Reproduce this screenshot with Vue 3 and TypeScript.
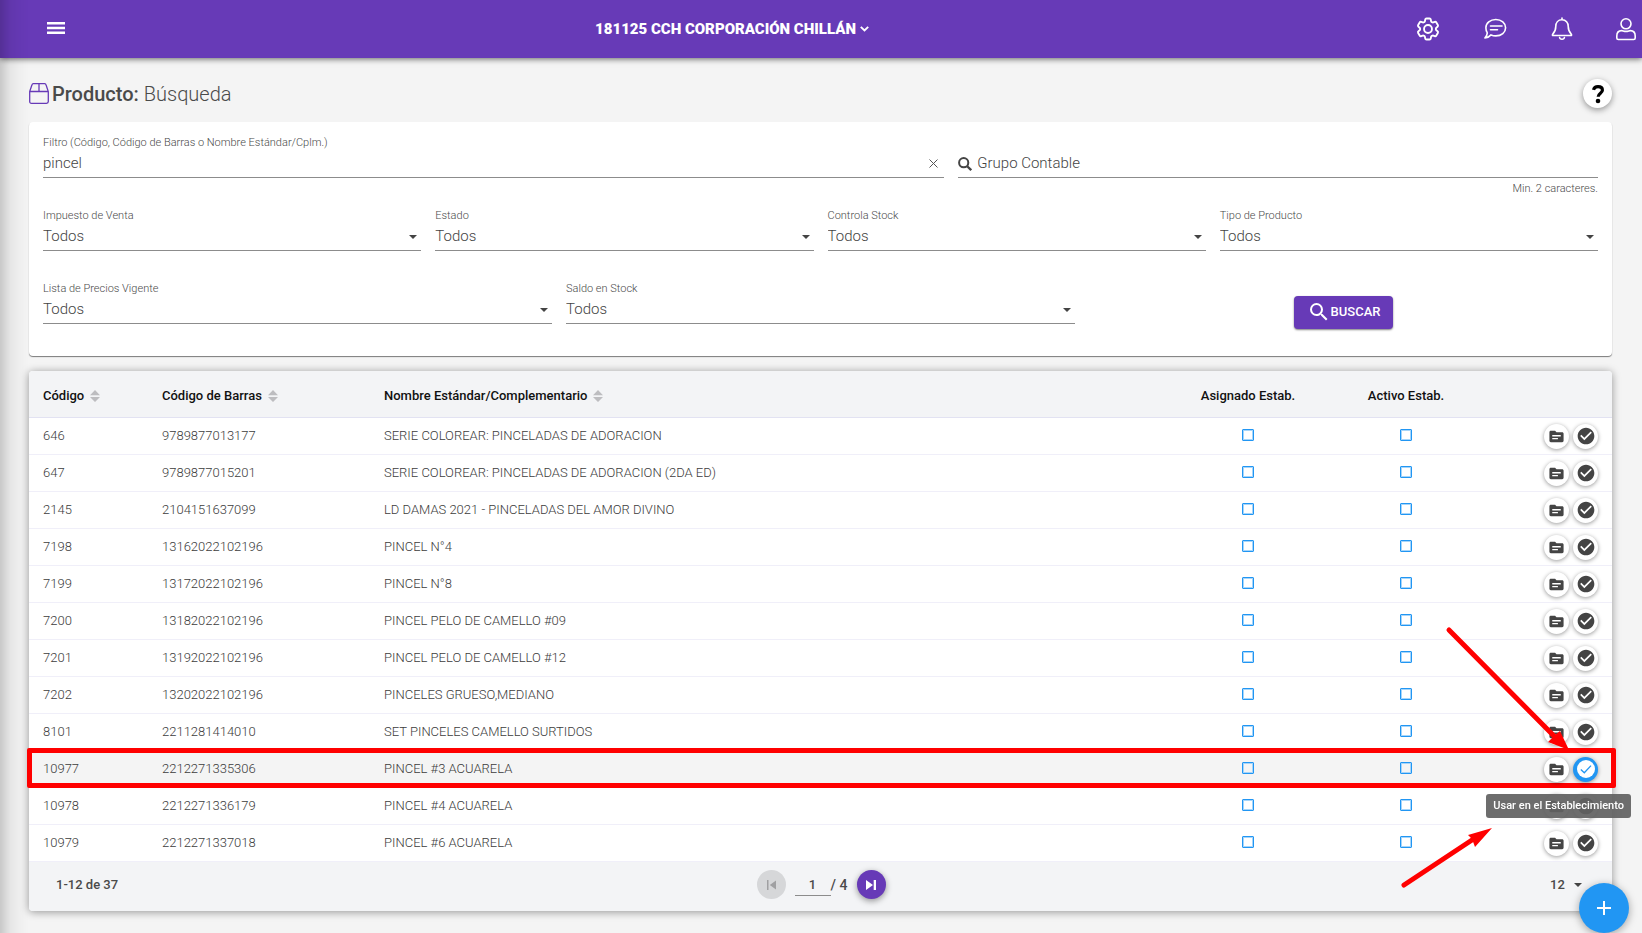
<script setup lang="ts">
import { ref } from 'vue'

interface Product {
  code: string
  barcode: string
  name: string
  assigned: boolean
  active: boolean
  marked?: boolean
}

const rows: [string, string, string][] = [
  ['646', '9789877013177', 'SERIE COLOREAR: PINCELADAS DE ADORACION'],
  ['647', '9789877015201', 'SERIE COLOREAR: PINCELADAS DE ADORACION (2DA ED)'],
  ['2145', '2104151637099', 'LD DAMAS 2021 - PINCELADAS DEL AMOR DIVINO'],
  ['7198', '13162022102196', 'PINCEL N°4'],
  ['7199', '13172022102196', 'PINCEL N°8'],
  ['7200', '13182022102196', 'PINCEL PELO DE CAMELLO #09'],
  ['7201', '13192022102196', 'PINCEL PELO DE CAMELLO #12'],
  ['7202', '13202022102196', 'PINCELES GRUESO,MEDIANO'],
  ['8101', '2211281414010', 'SET PINCELES CAMELLO SURTIDOS'],
  ['10977', '2212271335306', 'PINCEL #3 ACUARELA'],
  ['10978', '2212271336179', 'PINCEL #4 ACUARELA'],
  ['10979', '2212271337018', 'PINCEL #6 ACUARELA'],
]

const products = ref<Product[]>(
  rows.map(([code, barcode, name]) => ({
    code,
    barcode,
    name,
    assigned: false,
    active: false,
    marked: code === '10977',
  })),
)

const query = ref('pincel')
const group = ref('')
const page = ref('1')

const selects = [
  { id: 'impuesto', label: 'Impuesto de Venta', span: 'span3' },
  { id: 'estado', label: 'Estado', span: 'span3' },
  { id: 'controla', label: 'Controla Stock', span: 'span3' },
  { id: 'tipo', label: 'Tipo de Producto', span: 'span3' },
  { id: 'lista', label: 'Lista de Precios Vigente', span: 'span4' },
  { id: 'saldo', label: 'Saldo en Stock', span: 'span4' },
]
const sortable = ['Código', 'Código de Barras', 'Nombre Estándar/Complementario']
</script>

<template>
  <div class="page">
    <header class="topbar">
      <button class="menu" aria-label="Menú">
        <svg width="18" height="12" viewBox="0 0 18 12"><path d="M0 0h18v2.500H0zM0 4.800h18v2.400H0zM0 9.500h18v2.500H0z" /></svg>
      </button>
      <div class="org">
        <button class="org-button">
          181125 CCH CORPORACIÓN CHILLÁN
          <svg width="9" height="6" viewBox="0 0 9 6"><path d="M.8.8l3.7 3.7L8.2.8" fill="none" stroke="#fff" stroke-width="1.900" /></svg>
        </button>
      </div>
      <nav class="tools" aria-label="Cuenta">
        <button aria-label="Configuración">
          <svg width="28" height="28" viewBox="0 0 24 24">
            <path d="M9.594 3.94c.09-.542.56-.94 1.11-.94h2.593c.55 0 1.02.398 1.11.94l.213 1.281c.063.374.313.686.645.87.074.04.147.083.22.127.325.196.72.257 1.075.124l1.217-.456a1.125 1.125 0 0 1 1.37.49l1.296 2.247a1.125 1.125 0 0 1-.26 1.431l-1.003.827c-.293.241-.438.613-.43.992a7.723 7.723 0 0 1 0 .255c-.008.378.137.75.43.991l1.004.827c.424.35.534.955.26 1.43l-1.298 2.247a1.125 1.125 0 0 1-1.369.491l-1.217-.456c-.355-.133-.75-.072-1.076.124a6.47 6.47 0 0 1-.22.128c-.331.183-.581.495-.644.869l-.213 1.281c-.09.543-.56.94-1.11.94h-2.594c-.55 0-1.019-.398-1.11-.94l-.213-1.281c-.062-.374-.312-.686-.644-.87a6.52 6.52 0 0 1-.22-.127c-.325-.196-.72-.257-1.076-.124l-1.217.456a1.125 1.125 0 0 1-1.369-.49l-1.297-2.247a1.125 1.125 0 0 1 .26-1.431l1.004-.827c.292-.24.437-.613.43-.991a6.932 6.932 0 0 1 0-.255c.007-.38-.138-.751-.43-.992l-1.004-.827a1.125 1.125 0 0 1-.26-1.43l1.297-2.247a1.125 1.125 0 0 1 1.37-.491l1.216.456c.356.133.751.072 1.076-.124.072-.044.146-.086.22-.128.332-.183.582-.495.644-.869l.214-1.28Z" />
            <circle cx="12" cy="12" r="3.4" />
          </svg>
        </button>
        <button aria-label="Mensajes">
          <svg width="24" height="24" viewBox="0 0 24 24">
            <path d="M12.8 2.5C18.4 2.5 22.6 6 22.6 10.700S18.400 18.900 12.800 18.900C11 18.900 9.400 18.500 8 17.900C6.500 19.600 4.200 20.900 1.900 21C3.200 19.600 4.200 18 4.300 15.900C3.300 14.500 2.900 12.700 2.900 10.700C2.900 6 7.200 2.500 12.800 2.500Z" />
            <path d="M7.500 9h11.500M7.500 12.700h7" />
          </svg>
        </button>
        <button aria-label="Notificaciones">
          <svg width="24" height="24" viewBox="0 0 24 24">
            <path d="M12 1v1.800M12 2.800C8 2.800 5.800 5.700 5.800 9.300C5.800 14 4.300 15.500 2.700 17.200C2.100 17.900 2.400 18.500 3.200 18.500H20.800C21.600 18.500 21.900 17.900 21.300 17.200C19.700 15.500 18.200 14 18.200 9.300C18.200 5.700 16 2.800 12 2.800ZM9.600 20.500C9.900 22.800 14.100 22.800 14.400 20.500" />
          </svg>
        </button>
        <button class="last" aria-label="Usuario">
          <svg width="22" height="24" viewBox="0 0 22 24">
            <circle cx="11" cy="6.800" r="5" />
            <path d="M6.700 13.600C8 13.600 8.700 14.400 11 14.400S14 13.600 15.300 13.600C18.500 13.600 20.200 16 20.200 19V21C20.200 21.900 19.600 22.500 18.700 22.500H3.300C2.400 22.500 1.800 21.900 1.800 21V19C1.800 16 3.500 13.600 6.700 13.600Z" />
          </svg>
        </button>
      </nav>
    </header>

    <main class="content">
      <div class="heading">
        <svg width="20" height="21" viewBox="0 0 20 21" fill="none" stroke="#673ab7" stroke-width="1.300">
          <path d="M.7 8.500L3 1.800C3.200 1.100 3.600.7 4.300.7H15.700C16.400.7 16.800 1.100 17 1.800L19.300 8.500V18.500C19.300 19.700 18.700 20.300 17.500 20.300H2.500C1.300 20.300.7 19.700.7 18.500ZM.7 8.500H19.300M10 .7V8.500" />
        </svg>
        <h1>Producto: <span>Búsqueda</span></h1>
        <button class="help" aria-label="Ayuda">
          <svg width="14" height="20" viewBox="0 0 14 20"><path d="M2.500 5.800C3.100 3.600 4.800 2.700 7 2.700C9.700 2.700 11.400 4 11.400 6.200C11.400 9.200 7.200 9.200 7.200 12.800" fill="none" stroke="#000" stroke-width="3.200" /><circle cx="7" cy="17" r="2.300" /></svg>
        </button>
      </div>

      <form class="card filters" @submit.prevent>
        <div class="field span7">
          <label for="filtro">Filtro (Código, Código de Barras o Nombre Estándar/Cplm.)</label>
          <div class="control">
            <input id="filtro" v-model="query" type="text" />
            <button class="clear" type="button" aria-label="Limpiar" @click="query = ''">
              <svg width="9" height="9" viewBox="0 0 9 9"><path d="M.5.5l8 8M8.500.5l-8 8" stroke="#555" stroke-width="1" /></svg>
            </button>
          </div>
        </div>
        <div class="field span5 group">
          <div class="control">
            <svg width="14" height="14" viewBox="0 0 14 14" fill="none" stroke="#444"><circle cx="5.700" cy="5.700" r="4.600" stroke-width="2" /><path d="M9.200 9.200l4 4" stroke-width="2.300" /></svg>
            <input v-model="group" type="text" placeholder="Grupo Contable" aria-label="Grupo Contable" />
          </div>
          <small>Min. 2 caracteres.</small>
        </div>
        <div v-for="s in selects" :key="s.id" class="field" :class="s.span">
          <label :for="s.id">{{ s.label }}</label>
          <div class="control">
            <select :id="s.id"><option>Todos</option></select>
            <svg class="caret" width="8" height="4" viewBox="0 0 8 4"><path d="M0 0h8L4 4z" /></svg>
          </div>
        </div>
        <div class="submit span4">
          <button class="search" type="submit">
            <svg width="24" height="24" viewBox="0 0 24 24"><path d="M15.500 14h-.79l-.28-.27A6.471 6.471 0 0 0 16 9.500 6.500 6.500 0 1 0 9.500 16c1.610 0 3.090-.59 4.230-1.570l.27.28v.79l5 4.990L20.490 19l-4.990-5zm-6 0C7.010 14 5 11.990 5 9.500S7.010 5 9.500 5 14 7.010 14 9.500 11.990 14 9.500 14z" /></svg>
            BUSCAR
          </button>
        </div>
      </form>

      <section class="card results">
        <table>
          <colgroup><col class="c1" /><col class="c2" /><col /><col class="c4" /><col class="c4" /><col class="c6" /></colgroup>
          <thead>
            <tr>
              <th v-for="h in sortable" :key="h" scope="col">
                <button class="sort">
                  {{ h }}
                  <svg width="10" height="12" viewBox="0 0 10 12"><path d="M0 5.300L5 0l5 5.300zM0 6.900h10L5 12z" /></svg>
                </button>
              </th>
              <th class="mid" scope="col">Asignado Estab.</th>
              <th class="mid" scope="col">Activo Estab.</th>
              <th aria-label="Acciones"></th>
            </tr>
          </thead>
          <tbody>
            <tr v-for="p in products" :key="p.code" :class="{ marked: p.marked }">
              <td>{{ p.code }}</td>
              <td>{{ p.barcode }}</td>
              <td>{{ p.name }}</td>
              <td class="mid"><input v-model="p.assigned" type="checkbox" :aria-label="`Asignado ${p.code}`" /></td>
              <td class="mid"><input v-model="p.active" type="checkbox" :aria-label="`Activo ${p.code}`" /></td>
              <td class="last-cell">
                <div v-if="p.marked" class="frame"></div>
                <div class="actions">
                  <button aria-label="Ver detalle">
                    <svg width="17" height="17" viewBox="0 0 24 24"><path d="M20 6h-8l-2-2H4c-1.100 0-1.990.9-1.990 2L2 18c0 1.100.9 2 2 2h16c1.100 0 2-.9 2-2V8c0-1.100-.9-2-2-2zm-6 10H6v-2h8v2zm4-4H6v-2h12v2z" /></svg>
                  </button>
                  <button class="use" aria-label="Usar en el Establecimiento">
                    <svg v-if="p.marked" width="18" height="18" viewBox="0 0 18 18"><circle cx="9" cy="9" r="9" fill="#fff" /><path d="M3.800 9.500l3.500 3.300L14 5.600" fill="none" stroke="#2196f3" stroke-width="1.300" /></svg>
                    <svg v-else width="20" height="20" viewBox="0 0 24 24"><path d="M12 2C6.480 2 2 6.480 2 12s4.480 10 10 10 10-4.480 10-10S17.520 2 12 2zm-2 15l-5-5 1.410-1.410L10 14.170l7.590-7.590L19 8l-9 9z" /></svg>
                  </button>
                  <template v-if="p.marked">
                    <div class="tip" role="tooltip">Usar en el Establecimiento</div>
                    <svg class="arrows" width="180" height="270" viewBox="0 0 180 270" fill="#f00" stroke="#f00">
                      <path d="M51 11L157 118M6 266L74 221" stroke-width="5" stroke-linecap="round" fill="none" />
                      <path d="M171 131L162 112L157 116L150 123ZM94 209L70 216L74 220L77 228Z" stroke="none" />
                    </svg>
                  </template>
                </div>
              </td>
            </tr>
          </tbody>
        </table>
        <footer class="pager">
          <span class="range">1-12 de 37</span>
          <div class="pages">
            <button class="round prev" disabled aria-label="Primera página">
              <svg width="9" height="10" viewBox="0 0 9 10"><path d="M0 0h1.500v10H0zM9 .5v9L2.800 5z" /></svg>
            </button>
            <input v-model="page" type="text" aria-label="Página" />
            <span>/ 4</span>
            <button class="round next" aria-label="Última página">
              <svg width="10" height="10" viewBox="0 0 10 10"><path d="M0 0l7 5-7 5zM7.700 0H10v10H7.700z" /></svg>
            </button>
          </div>
          <div class="size">
            <select aria-label="Filas por página"><option>12</option></select>
            <svg class="caret" width="8" height="4" viewBox="0 0 8 4"><path d="M0 0h8L4 4z" /></svg>
          </div>
        </footer>
      </section>
    </main>

    <button class="fab" aria-label="Agregar">
      <svg width="14" height="14" viewBox="0 0 14 14"><path d="M7 0v14M0 7h14" stroke="#fff" stroke-width="2" /></svg>
    </button>
    <div class="edge"></div>
  </div>
</template>

<style>
body {
  margin: 0;
  background: #f4f4f4;
}
</style>

<style scoped>
.page,
.page * {
  box-sizing: border-box;
}
.page {
  min-height: 100vh;
  font-family: Roboto, 'Liberation Sans', sans-serif;
  font-size: 13px;
  color: #4a4a4a;
  background: #f4f4f4;
}
button,
input,
select {
  font: inherit;
  color: inherit;
  background: none;
  border: 0;
  padding: 0;
  margin: 0;
  outline: 0;
  border-radius: 0;
}
select {
  appearance: none;
}
svg {
  flex: none;
  display: block;
}
.topbar {
  position: relative;
  display: flex;
  align-items: center;
  height: 58px;
  padding-left: 42px;
  background: #673ab7;
  box-shadow: 0 1px 6px rgba(0, 0, 0, 0.6);
}
.menu {
  width: 28px;
  height: 40px;
  padding-bottom: 2px;
  display: flex;
  align-items: center;
  justify-content: center;
  fill: #fff;
}
.org {
  flex: 1;
  display: flex;
  justify-content: center;
}
.org-button {
  display: flex;
  align-items: center;
  gap: 4px;
  font-size: 15px;
  font-weight: 900;
  color: #fff;
}
.tools {
  display: flex;
}
.tools button {
  width: 67px;
  height: 58px;
  display: flex;
  align-items: center;
  justify-content: center;
}
.tools .last {
  width: 47px;
  padding-right: 5px;
  justify-content: flex-end;
}
.tools svg {
  fill: none;
  stroke: #fff;
  stroke-width: 1.6;
  stroke-linecap: round;
  stroke-linejoin: round;
}
.content {
  padding: 21px 30px 14px 29px;
}
.heading {
  display: flex;
  align-items: center;
  height: 29px;
  margin-bottom: 14px;
}
h1 {
  flex: 1;
  margin: 0 0 0 3px;
  font-size: 20px;
  line-height: 24px;
  font-weight: 500;
}
h1 span {
  font-weight: 300;
}
.help {
  width: 29px;
  height: 29px;
  display: flex;
  align-items: center;
  justify-content: center;
  border-radius: 50%;
  background: #fff;
  box-shadow: 0 2px 6px rgba(0, 0, 0, 0.4);
}
.card {
  background: #fff;
  border-radius: 4px;
}
.filters {
  display: grid;
  grid-template-columns: repeat(12, minmax(0, 1fr));
  grid-auto-rows: 73px;
  column-gap: 14px;
  padding: 14px 14px 1px;
  box-shadow: 0 1px 1px rgba(0, 0, 0, 0.5);
}
.span3 {
  grid-column: span 3;
}
.span4 {
  grid-column: span 4;
}
.span5 {
  grid-column: span 5;
}
.span7 {
  grid-column: span 7;
}
.field label {
  display: block;
  height: 14px;
  font-size: 11px;
  line-height: 14px;
  font-weight: 300;
  color: #4a4a4a;
}
.control {
  display: flex;
  align-items: center;
  height: 28px;
  border-bottom: 1px solid #8c8c8c;
}
.control input,
.control select {
  flex: 1;
  min-width: 0;
  height: 27px;
  padding-bottom: 2px;
  font-size: 15px;
  font-weight: 300;
  color: #444;
}
.control input::placeholder {
  color: #444;
  opacity: 1;
}
.caret {
  fill: #444;
  margin-right: 4px;
}
.clear {
  width: 9px;
  margin-right: 6px;
}
.group {
  padding-top: 14px;
}
.control svg + input {
  margin-left: 5px;
}
small {
  display: block;
  margin-top: 4px;
  text-align: right;
  font-size: 11px;
  line-height: 14px;
  font-weight: 300;
  color: #4a4a4a;
}
.submit {
  display: flex;
  align-items: flex-start;
  justify-content: center;
  padding-top: 14px;
}
.search {
  display: flex;
  align-items: center;
  height: 33px;
  padding: 0 13px 2px;
  border-radius: 4px;
  background: #673ab7;
  color: #fff;
  fill: #fff;
  font-weight: 500;
  box-shadow: 0 1px 2px rgba(0, 0, 0, 0.5);
}
.results {
  margin-top: 15px;
  box-shadow: 0 1px 8px rgba(0, 0, 0, 0.4);
}
table {
  position: relative;
  width: 100%;
  table-layout: fixed;
  border-collapse: separate;
  border-spacing: 0;
}
.c1 {
  width: 119px;
}
.c2 {
  width: 222px;
}
.c4 {
  width: 158px;
}
.c6 {
  width: 127px;
}
th,
td {
  padding: 0 14px;
  text-align: left;
  white-space: nowrap;
}
th {
  height: 47px;
  background: #f3f4f6;
  border-bottom: 1px solid #e2e2f2;
  color: #111;
  font-weight: 500;
  padding-top: 3px;
}
th:first-child {
  border-top-left-radius: 4px;
}
th:last-child {
  border-top-right-radius: 4px;
}
.sort {
  display: flex;
  align-items: center;
  gap: 6px;
  fill: #bdbdc0;
}
td {
  height: 37px;
  padding-bottom: 2px;
  border-bottom: 1px solid #f0eff9;
  font-weight: 300;
  color: #3c3c3c;
}
.last-cell {
  padding-bottom: 0;
}
.mid {
  text-align: center;
}
.mid input {
  appearance: none;
  display: block;
  margin: 0 auto;
  width: 12px;
  height: 12px;
  border: 1px solid #2196f3;
  border-radius: 1px;
  box-shadow: inset 0 0 0 1px #a6d5fa;
}
.actions {
  position: relative;
  display: flex;
  justify-content: flex-end;
  gap: 4px;
}
.actions button {
  width: 25px;
  height: 25px;
  display: flex;
  align-items: center;
  justify-content: center;
  border-radius: 50%;
  background: #fff;
  fill: #444;
  box-shadow: 0 1px 4px rgba(0, 0, 0, 0.4);
}
.marked {
  position: relative;
  z-index: 1;
}
.marked td {
  background: #f4f4f4;
}
.frame {
  position: absolute;
  inset: -3px -4px 0 -2px;
  border: 5px solid #f00;
  border-radius: 2px;
  pointer-events: none;
}
.actions .use {
  position: relative;
}
.marked .use {
  background: #2196f3;
}
.tip {
  position: absolute;
  z-index: 2;
  top: 37px;
  right: -33px;
  padding: 0 7px;
  border-radius: 3px;
  background: rgba(97, 97, 97, 0.92);
  color: #fff;
  font-size: 11px;
  line-height: 24px;
  font-weight: 500;
}
.arrows {
  position: absolute;
  z-index: 3;
  top: -138px;
  right: 20px;
  overflow: visible;
  pointer-events: none;
}
.pager {
  display: grid;
  grid-template-columns: 1fr auto 1fr;
  align-items: center;
  height: 49px;
  padding: 0 26px 4px 27px;
  background: #f3f4f6;
  border-radius: 0 0 4px 4px;
  font-weight: 500;
}
.pages {
  display: flex;
  align-items: center;
}
.pages input {
  width: 36px;
  height: 22px;
  margin-left: 9px;
  text-align: center;
  border-bottom: 1px solid #8c8c8c;
}
.pages span {
  width: 26px;
  font-size: 14px;
}
.round {
  width: 29px;
  height: 29px;
  display: flex;
  align-items: center;
  justify-content: center;
  border-radius: 50%;
}
.prev {
  background: #d6d7d9;
  fill: #a0a0a2;
}
.next {
  background: #673ab7;
  fill: #fff;
  box-shadow: 0 2px 6px rgba(0, 0, 0, 0.4);
}
.size {
  display: flex;
  align-items: center;
  justify-content: flex-end;
}
.size select {
  width: 24px;
}
.fab {
  position: fixed;
  z-index: 2;
  right: 13px;
  bottom: 0;
  width: 50px;
  height: 50px;
  display: flex;
  align-items: center;
  justify-content: center;
  border-radius: 50%;
  background: #2196f3;
  box-shadow: 0 2px 8px rgba(0, 0, 0, 0.35);
}
.edge {
  position: fixed;
  inset: 0;
  pointer-events: none;
  background: linear-gradient(90deg, rgba(0, 0, 0, 0.18), rgba(0, 0, 0, 0.06) 10px, rgba(0, 0, 0, 0.02) 20px, transparent 29px);
}
</style>
